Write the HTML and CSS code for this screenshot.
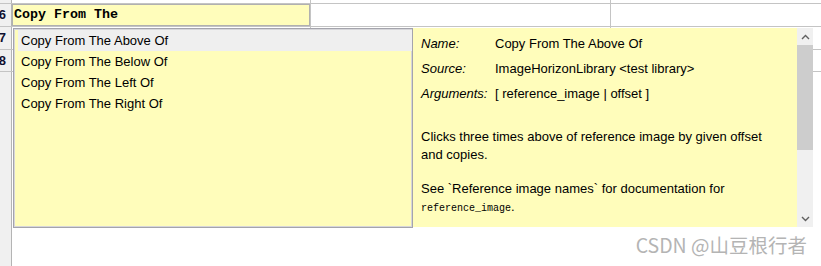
FILE: index.html
```html
<!DOCTYPE html>
<html lang="en">
  <head>
    <meta charset="UTF-8" />
    <title>Keyword completion</title>
    <link rel="stylesheet" href="styles.css">
  </head>
  <body>
    <div class="sheet">
      <div class="grid">
        <div class="row r5">
          <div class="rh"></div>
          <div class="cell col-a"></div>
          <div class="cell col-b"></div>
          <div class="cell col-c"></div>
        </div>
        <div class="row r6">
          <div class="rh">6</div>
          <div class="cell col-a editing">Copy From The</div>
          <div class="cell col-b"></div>
          <div class="cell col-c"></div>
        </div>
        <div class="row r7">
          <div class="rh">7</div>
          <div class="cell col-a"></div>
          <div class="cell col-b"></div>
          <div class="cell col-c"></div>
        </div>
        <div class="row r8">
          <div class="rh">8</div>
          <div class="cell col-a"></div>
          <div class="cell col-b"></div>
          <div class="cell col-c"></div>
        </div>
        <div class="row rest">
          <div class="rh"></div>
        </div>
      </div>

      <!-- autocomplete popup over the grid -->
      <div class="popup">
        <ul class="choices">
          <li class="selected">Copy From The Above Of</li>
          <li>Copy From The Below Of</li>
          <li>Copy From The Left Of</li>
          <li>Copy From The Right Of</li>
        </ul>

        <div class="details">
          <table class="meta">
            <tr><td class="label">Name:</td><td>Copy From The Above Of</td></tr>
            <tr><td class="label">Source:</td><td>ImageHorizonLibrary &lt;test library&gt;</td></tr>
            <tr><td class="label">Arguments:</td><td>[ reference_image | offset ]</td></tr>
          </table>
          <p>Clicks three times above of reference image by given offset and copies.</p>
          <p>See `Reference image names` for documentation for <code>reference_image</code>.</p>
        </div>

        <div class="scrollbar">
          <div class="arrow">
            <svg width="9" height="6" viewBox="0 0 9 6"><polyline points="1,5 4.5,1.5 8,5" fill="none" stroke="#606060" stroke-width="1.4"/></svg>
          </div>
          <div class="thumb"></div>
          <div class="track"></div>
          <div class="arrow">
            <svg width="9" height="6" viewBox="0 0 9 6"><polyline points="1,1 4.5,4.5 8,1" fill="none" stroke="#606060" stroke-width="1.4"/></svg>
          </div>
        </div>
      </div>

      <div class="watermark">CSDN @山豆根行者</div>
    </div>
  </body>
</html>
```

FILE: styles.css
```css
body {
  margin: 0;
  background: white;
  font-family: "Liberation Sans", Arial, sans-serif;
  font-size: 13px;
  color: #000;
}
.sheet {
  position: relative;
  width: 821px;
  height: 266px;
  overflow: hidden;
}
.grid {
  display: flex;
  flex-direction: column;
  height: 100%;
}
.row {
  display: flex;
  border-bottom: 1px solid #c4c4c4;
}
.r5 {
  height: 3px;
}
.r6 {
  height: 22px;
}
.r7 {
  height: 22px;
}
.r8 {
  height: 21px;
}
.rest {
  flex: 1;
  border-bottom: none;
}
.rh {
  width: 11px;
  flex: none;
  background: #f0f0f0;
  border-right: 1px solid #b4b4b4;
  direction: rtl;
  overflow: hidden;
  white-space: nowrap;
  font-weight: bold;
  font-size: 13px;
  line-height: 22px;
  text-indent: 5px;
  color: #101030;
}
.r8 .rh {
  line-height: 21px;
}
.cell {
  border-right: 1px solid #c4c4c4;
}
.col-a {
  width: 298px;
}
.col-b {
  width: 299px;
}
.col-c {
  flex: 1;
  border-right: none;
}
.editing {
  background: #fffdbb;
  box-shadow: inset 0 0 0 1px #b0b0b0;
  font-family: "Liberation Mono", "Courier New", monospace;
  font-weight: bold;
  font-size: 13.33px;
  line-height: 22px;
  padding-left: 2px;
  width: 296px;
}
.popup {
  position: absolute;
  left: 13px;
  top: 28px;
  width: 800px;
  height: 200px;
  display: flex;
  align-items: flex-start;
}
.choices {
  list-style: none;
  margin: 0;
  width: 394px;
  height: 198px;
  padding: 0 0 0 4px;
  background: #fffdbb;
  border: 1px solid #a4a4ac;
  box-shadow: inset 0 0 0 1px #d6d6da;
  flex: none;
}
.choices li {
  height: 21px;
  line-height: 21px;
  padding-left: 3px;
}
.choices li:first-child {
  margin-top: 1px;
}
.choices .selected {
  background: #efefef;
}
.details {
  width: 360px;
  height: 196px;
  padding: 3px 16px 0 8px;
  background: #fffdbb;
  flex: none;
  overflow: hidden;
}
.meta {
  border-collapse: collapse;
}
.meta td {
  padding: 0;
  height: 25px;
  line-height: 25px;
  white-space: nowrap;
}
.meta .label {
  width: 74px;
  font-style: italic;
}
.details p {
  margin: 22px 0 0;
  line-height: 18px;
}
.details p + p {
  margin-top: 16px;
}
.details code {
  font-family: "Liberation Mono", "Courier New", monospace;
  font-size: 10px;
}
.scrollbar {
  width: 16px;
  height: 199px;
  background: #f0f0f0;
  display: flex;
  flex-direction: column;
  flex: none;
}
.arrow {
  height: 17px;
  display: flex;
  align-items: center;
  justify-content: center;
}
.thumb {
  height: 105px;
  background: #cdcdcd;
}
.track {
  flex: 1;
}
.watermark {
  position: absolute;
  right: 14px;
  top: 230px;
  font-family: "Noto Sans CJK SC", "Noto Sans", sans-serif;
  font-size: 19.5px;
  color: #b4b4b4;
}
```
